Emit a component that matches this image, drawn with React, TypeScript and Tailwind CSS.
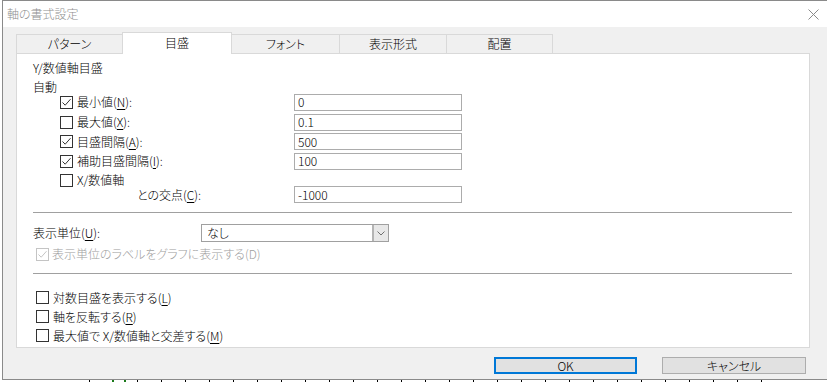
import type { ReactNode } from 'react';

const tabs = ['パターン', '目盛', 'フォント', '表示形式', '配置'];
const tabWidths = ['w-[106px]', 'w-[110px]', 'w-[107px]', 'w-[107px]', 'w-[107px]'];

function Box({ checked, disabled }: { checked?: boolean; disabled?: boolean }) {
  const c = disabled ? '#c4c4c4' : '#333333';
  return (
    <span
      className={`flex h-[13px] w-[13px] shrink-0 items-center justify-center border bg-white ${
        disabled ? 'border-[#c4c4c4]' : 'border-[#333]'
      }`}
    >
      {checked && (
        <svg width="11" height="11" viewBox="0 0 11 11">
          <path d="M1.5 5.5 L4.2 8.2 L9.5 2.2" fill="none" stroke={c} strokeWidth="1" />
        </svg>
      )}
    </span>
  );
}

const K = ({ children }: { children: ReactNode }) => (
  <span className="underline underline-offset-[2px]">{children}</span>
);

function Field({ value }: { value: string }) {
  return (
    <div className="flex h-[17px] w-[168px] items-center border border-[#acacac] bg-white pl-[3px] leading-none">
      {value}
    </div>
  );
}

function AutoRow({ checked, label, value, h }: { checked?: boolean; label: ReactNode; value: string; h: string }) {
  return (
    <div className={`flex ${h} items-center`}>
      <div className="flex w-[261px] items-center gap-[4px] pl-[27px]">
        <Box checked={checked} />
        <span>{label}</span>
      </div>
      <Field value={value} />
    </div>
  );
}

function Check({ label }: { label: ReactNode }) {
  return (
    <div className="flex h-[19px] items-center gap-[4px] pl-[3px]">
      <Box />
      <span>{label}</span>
    </div>
  );
}

export default function App() {
  return (
    <div className="flex h-[382px] w-[827px] flex-col overflow-hidden bg-white text-[12px] font-light leading-[16px] text-black [font-feature-settings:'palt'] font-['Noto_Sans_CJK_JP','Noto_Sans',sans-serif]">
      <div className="ml-[2px] flex h-[380px] w-[825px] flex-col border-y border-l border-[#8a8a8a]">
        {/* title bar */}
        <div className="flex h-[26px] shrink-0 items-center justify-between bg-white pl-[4px] pr-[8px]">
          <span className="text-[#8f8f8f]">軸の書式設定</span>
          <svg width="11" height="11" viewBox="0 0 11 11">
            <path d="M0.5 0.5 L10.5 10.5 M10.5 0.5 L0.5 10.5" stroke="#8a8a8a" strokeWidth="1" />
          </svg>
        </div>

        <div className="flex flex-1 flex-col bg-[#f0f0f0] pl-[13px] pt-[5px]">
          {/* tabs */}
          <div className="flex h-[21px] items-end">
            {tabs.map((t, i) =>
              i === 1 ? (
                <div
                  key={t}
                  className={`relative z-10 -mb-px flex h-[22px] ${tabWidths[i]} items-center justify-center border-x border-t border-[#d9d9d9] bg-white pb-[2px]`}
                >
                  {t}
                </div>
              ) : (
                <div
                  key={t}
                  className={`flex h-[19px] ${tabWidths[i]} items-center justify-center border-t border-[#d9d9d9] bg-[#f0f0f0] ${
                    i === 4 ? 'border-r' : ''
                  } ${i === 2 ? '' : 'border-l'}`}
                >
                  {t}
                </div>
              ),
            )}
          </div>

          {/* panel */}
          <div className="flex h-[295px] w-[794px] flex-col border border-[#d9d9d9] bg-white pl-[16px] pr-[17px] pt-[6px]">
            <div>Y/数値軸目盛</div>
            <div className="mt-[3px]">自動</div>
            <div className="-mt-[3px] flex flex-col">
              <AutoRow h="h-[20px]" checked label={<>最小値(<K>N</K>):</>} value="0" />
              <AutoRow h="h-[20px]" label={<>最大値(<K>X</K>):</>} value="0.1" />
              <AutoRow h="h-[19px]" checked label={<>目盛間隔(<K>A</K>):</>} value="500" />
              <AutoRow h="h-[20px]" checked label={<>補助目盛間隔(<K>I</K>):</>} value="100" />
            </div>
            <div className="mt-[1px] flex h-[16px] items-center gap-[4px] pl-[27px]">
              <Box />
              <span>X/数値軸</span>
            </div>
            <div className="-mt-[2px] flex h-[17px] items-center">
              <div className="w-[261px] pl-[104px]">
                との交点(<K>C</K>):
              </div>
              <Field value="-1000" />
            </div>

            <div className="mt-[9px] h-px bg-[#a0a0a0]" />

            <div className="mt-[11px] flex h-[18px] items-center">
              <span className="w-[168px]">
                表示単位(<K>U</K>):
              </span>
              <div className="flex h-[18px] w-[188px] items-center border border-[#a0a0a0] bg-white">
                <span className="flex-1 pl-[5px]">なし</span>
                <span className="flex h-[16px] w-[16px] items-center justify-center border-l-2 border-[#b4b4b4] bg-[#e8e8e8]">
                  <svg width="8" height="5" viewBox="0 0 8 5">
                    <path d="M0.5 0.5 L4 4 L7.5 0.5" fill="none" stroke="#707070" strokeWidth="1" />
                  </svg>
                </span>
              </div>
            </div>
            <div className="mt-[5px] flex h-[14px] items-center gap-[3px] pl-[3px] text-[#a0a0a0]">
              <Box checked disabled />
              <span>表示単位のラベルをグラフに表示する(D)</span>
            </div>

            <div className="mt-[12px] h-px bg-[#a0a0a0]" />

            <div className="mt-[14px] flex flex-col">
              <Check label={<>対数目盛を表示する(<K>L</K>)</>} />
              <Check label={<>軸を反転する(<K>R</K>)</>} />
              <Check label={<>最大値で X/数値軸と交差する(<K>M</K>)</>} />
            </div>
          </div>

          {/* buttons */}
          <div className="mt-[9px] flex gap-[25px] pl-[478px]">
            <button
              type="button"
              className="flex h-[17px] w-[143px] items-center justify-center border-2 border-[#0078d7] bg-[#e1e1e1] leading-none"
            >
              OK
            </button>
            <button
              type="button"
              className="flex h-[17px] w-[144px] items-center justify-center border border-[#adadad] bg-[#e1e1e1] leading-none"
            >
              キャンセル
            </button>
          </div>
        </div>
      </div>

      {/* chart axis peeking below */}
      <div className="relative flex h-[2px] gap-[23px] pl-[89px]">
        {Array.from({ length: 29 }).map((_, i) => (
          <span key={i} className="h-[2px] w-px shrink-0 bg-black" />
        ))}
        <span className="absolute left-[112px] top-0 h-[2px] w-[2px] bg-[#1a7a1a]" />
        <span className="absolute left-[124px] top-0 h-[2px] w-[2px] bg-[#1a7a1a]" />
      </div>
    </div>
  );
}
